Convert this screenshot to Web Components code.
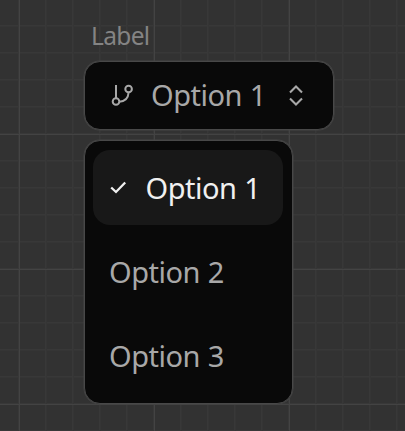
<!DOCTYPE html>
<html lang="en">
<head>
<meta charset="utf-8">
<title>Select</title>
<style>
html, body { margin: 0; height: 100%; overflow: hidden; }
body { font-family: "Noto Sans", "Open Sans", sans-serif; background: #323232; }
</style>
</head>
<body>
<grid-canvas>
  <select-field label="Label">
    <select-trigger slot="trigger">Option 1</select-trigger>
    <select-menu slot="menu">
      <select-option selected>Option 1</select-option>
      <select-option>Option 2</select-option>
      <select-option>Option 3</select-option>
    </select-menu>
  </select-field>
</grid-canvas>
<script>
const define = (name, markup, setup) => customElements.define(name, class extends HTMLElement {
  constructor() {
    super();
    this.attachShadow({ mode: "open" }).innerHTML = markup;
  }
  connectedCallback() { if (setup) setup(this); }
});

define("grid-canvas", `<style>
:host { display: block; box-sizing: border-box; width: 405px; height: 431px; padding: 21px 0 0 83.5px;
  background-color: #323232;
  background-image:
    linear-gradient(90deg, #434343 1px, transparent 1px),
    linear-gradient(#434343 1px, transparent 1px),
    linear-gradient(90deg, #383838 1px, #353535 1px, #353535 2px, transparent 2px),
    linear-gradient(#383838 1px, #353535 1px, #353535 2px, transparent 2px);
  background-size: 135px 135px, 135px 135px, 27px 27px, 27px 27px;
  background-position: 19px 0, 0 134px, 18px 0, 0 133px; }
</style><slot></slot>`);

define("select-field", `<style>
:host { display: flex; flex-direction: column; align-items: flex-start; }
.label { height: 30px; line-height: 30px; padding-left: 7.5px; margin-bottom: 10px; font-size: 24.5px; letter-spacing: -.65px; color: #848484; }
slot[name=menu] { display: block; margin-top: 10px; }
</style><div class="label"></div><slot name="trigger"></slot><slot name="menu"></slot>`,
el => { el.shadowRoot.querySelector(".label").textContent = el.getAttribute("label"); });

define("select-trigger", `<style>
:host { display: flex; align-items: center; box-sizing: border-box; width: 250px; height: 69px; padding: 0 29px 0 25px;
  border: 1px solid #484848; box-shadow: 0 0 0 .5px #444; border-radius: 16px; background: #090909; color: #a8a8a8; }
.text { flex: 1; padding: 0 0 1px 15.5px; font-size: 29px; line-height: 40px; letter-spacing: -.5px; word-spacing: .7px; white-space: nowrap; }
svg { flex: none; fill: none; stroke: currentColor; }
</style>
<svg width="26" height="26" viewBox="0 0 26 26" stroke-width="2"><path d="M6 2v13M9.4 18.8C14.6 18.4 18.2 15.5 18.6 9.5"/><circle cx="6" cy="18.5" r="3.3"/><circle cx="18.6" cy="6" r="3.3"/></svg>
<span class="text"><slot></slot></span>
<svg width="16" height="24" viewBox="0 0 16 24" stroke-width="2.1"><path d="M2 8.4 8 2.4l6 6M2 14.6l6 6 6-6"/></svg>`);

define("select-menu", `<style>
:host { display: flex; flex-direction: column; gap: 9.5px; box-sizing: border-box; width: 209.5px; height: 264px; padding: 9px 8px;
  border: 1px solid #484848; box-shadow: 0 0 0 .5px #444; border-radius: 16px; background: #090909; }
</style><slot></slot>`);

define("select-option", `<style>
:host { display: flex; align-items: center; box-sizing: border-box; height: 75px; width: 190.5px; padding: 0 0 1px 16.5px;
  border-radius: 17px; color: #a8a8a8; font-size: 29px; line-height: 40px; letter-spacing: -.5px; word-spacing: .7px; white-space: nowrap; }
:host([selected]) { background: #181818; color: #f0f0f0; padding-bottom: 0; }
svg { display: none; flex: none; margin-right: 16.5px; }
:host([selected]) svg { display: block; }
</style>
<svg width="20" height="20" viewBox="0 0 20 20" fill="none" stroke="currentColor" stroke-width="2.3"><path d="M2.2 9.5 7 14 16.2 4.5"/></svg>
<slot></slot>`);
</script>
</body>
</html>
